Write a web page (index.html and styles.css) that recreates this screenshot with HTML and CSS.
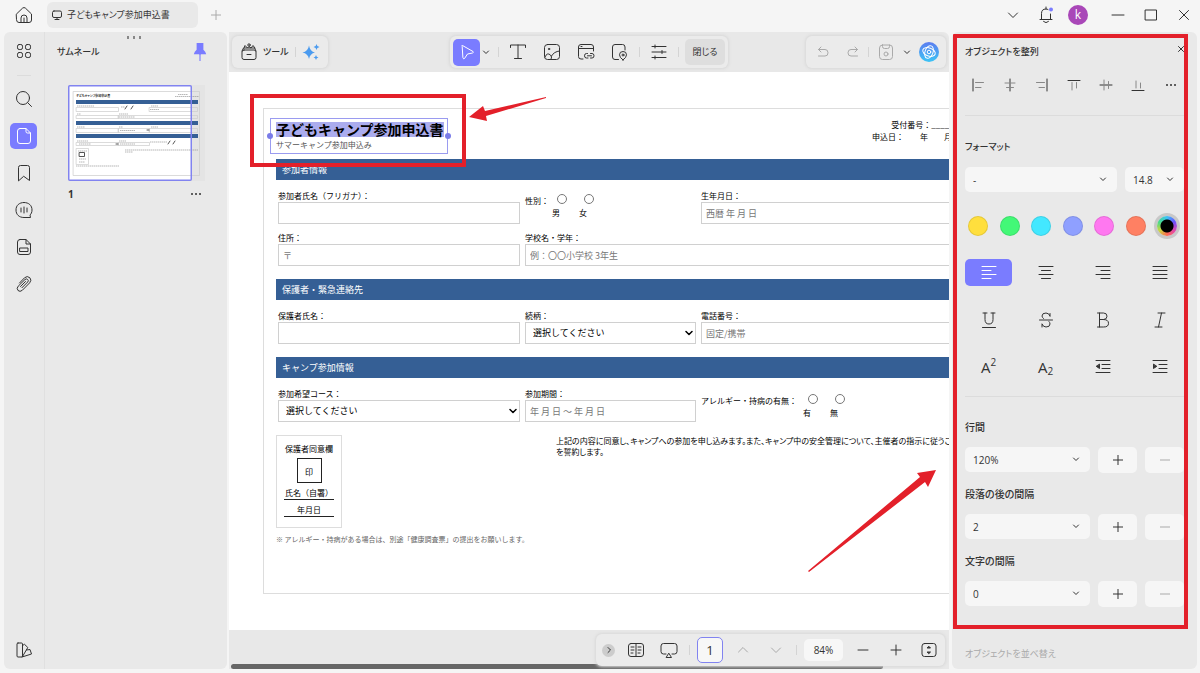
FILE: index.html
```html
<!DOCTYPE html>
<html lang="ja">
	<head>
		<meta charset="UTF-8">
		<title>子どもキャンプ参加申込書</title>
		<meta name="viewport" content="width=device-width,initial-scale=1" />
		<link rel="stylesheet" href="styles.css">
	</head>
	<body>
		<header class="titlebar">
			<button class="home" aria-label="ホーム"><svg class="icon" viewBox="0 0 18 18"><path d="M1.500 8L7.600 2.100Q9 1 10.400 2.100L16.500 8V14Q16.500 16.500 14 16.500H4Q1.500 16.500 1.500 14Z"/><path d="M6 16.500V12Q6 9 9 9T12 12V16.500M9 12V16.500"/></svg></button>
			<button class="tab"><svg viewBox="0 0 10 10"><rect x=".5" y="1" width="9" height="6.500" rx="1.500"/><path d="M3 9.500H7M5 7.500V9.500"/></svg>子どもキャンプ参加申込書</button>
			<button class="add" aria-label="新しいタブ"><svg viewBox="0 0 10 10"><path d="M5 0V10M0 5H10"/></svg></button>
			<div class="window">
				<button aria-label="メニュー"><svg class="icon" viewBox="0 0 18 18"><path d="M4.500 7L9 11.500L13.500 7"/></svg></button>
				<button aria-label="通知"><svg class="icon" viewBox="0 0 18 18"><path d="M3 13.500H15M4.500 13.500V7.500Q4.500 3 9 3Q10 3 11 3.500M13.500 8V13.500M9 3V1M6.500 15.500Q9 18 11.500 15.500"/><circle class="dot" cx="14" cy="3.500" r="2"/></svg></button>
				<span class="avatar">k</span>
				<button aria-label="最小化"><svg class="icon" viewBox="0 0 18 18"><path d="M3 9H15"/></svg></button>
				<button aria-label="最大化"><svg class="icon" viewBox="0 0 18 18"><rect x="3.500" y="4" width="11" height="10"/></svg></button>
				<button aria-label="終了"><svg class="icon" viewBox="0 0 18 18"><path d="M4.500 4.500L13.500 13.500M13.500 4.500L4.500 13.500"/></svg></button>
			</div>
		</header>

		<div class="main">
			<nav class="rail">
				<button aria-label="一覧"><svg class="icon" viewBox="0 0 18 18"><rect x="2.500" y="2.500" width="5" height="5" rx="1.700"/><rect x="10.500" y="2.500" width="5" height="5" rx="1.700"/><rect x="2.500" y="10.500" width="5" height="5" rx="1.700"/><rect x="10.500" y="10.500" width="5" height="5" rx="1.700"/></svg></button>
				<hr>
				<button aria-label="検索"><svg class="icon" viewBox="0 0 18 18"><circle cx="8" cy="8" r="6.500"/><path d="M12.800 12.800L16.500 16.500"/></svg></button>
				<button class="active" aria-label="サムネール"><svg class="icon" viewBox="0 0 18 18"><path d="M5 1.500H11L15.500 6V14Q15.500 16.500 13 16.500H5Q2.500 16.500 2.500 14V4Q2.500 1.500 5 1.500ZM11 1.500V4.500Q11 6 12.500 6H15.500"/></svg></button>
				<button aria-label="ブックマーク"><svg class="icon" viewBox="0 0 18 18"><path d="M3.500 16.500V3.500Q3.500 1.500 5.500 1.500H12.500Q14.500 1.500 14.500 3.500V16.500L9 12.500Z"/></svg></button>
				<button aria-label="コメント"><svg class="icon" viewBox="0 0 18 18"><path d="M9 1.500C14 1.500 17 4.500 17 9C17 11.500 16 13 15 14L15.500 16.500H9C4 16.500 1 13.500 1 9S4 1.500 9 1.500ZM6 7V11M9 6V12M12 7V11"/></svg></button>
				<button aria-label="フィールド"><svg class="icon" viewBox="0 0 18 18"><path d="M5 1.500H11L15.500 6V14Q15.500 16.500 13 16.500H5Q2.500 16.500 2.500 14V4Q2.500 1.500 5 1.500ZM11 1.500V6H15.500"/><rect x="5" y="10" width="8" height="3.500"/></svg></button>
				<button aria-label="添付ファイル"><svg class="icon" viewBox="0 0 18 18"><path d="M4.500 8L9.500 2.800Q12.300 .3 14.900 2.800Q17 5.200 14.700 7.800L7.300 15.300Q5 17.300 3 15.500Q1.200 13.300 3.200 11.200L10 4.500Q11.500 3.300 12.700 4.500Q14 5.700 12.700 7L7 12.700M5.500 11.500L10.500 6.500"/></svg></button>
				<button class="last" aria-label="テーマ"><svg class="icon" viewBox="0 0 18 18"><rect x="2" y="2" width="5.500" height="14" rx="1"/><path d="M7.500 4.500L9.500 3.300L12.800 6.500L7.500 15.500M11.500 9L15 8.500L16.500 13L7 16"/></svg></button>
			</nav>

			<aside class="thumbs">
				<div class="grip"><i></i><i></i><i></i></div>
				<div class="thumbs-head">
					<h2>サムネール</h2>
					<button aria-label="ピン留め"><svg viewBox="0 0 12 16"><path class="pin" d="M3 0H9V6Q11 7.500 11.500 10H.5Q1 7.500 3 6Z"/><path class="pin-line" d="M6 10V16"/></svg></button>
				</div>
				<div class="thumb">
					<svg viewBox="0 0 138 96">
						<rect class="side" x="123" y="0" width="14" height="96"/>
						<rect class="paper" x="1" y="1" width="122" height="94"/>
						<rect class="sheet-line" x="5.500" y="6.500" width="126" height="84"/>
						<text x="8" y="12">子どもキャンプ参加申込書</text>
						<g class="bars"><rect x="8" y="15" width="122" height="4"/><rect x="8" y="36" width="122" height="4"/><rect x="8" y="49" width="122" height="4"/></g>
						<g class="boxes"><rect x="8.500" y="22.500" width="42" height="4"/><rect x="81.500" y="22.500" width="48" height="4"/><rect x="8.500" y="30.500" width="42" height="3"/><rect x="50.500" y="30.500" width="79" height="3"/><rect x="8.500" y="43.500" width="42" height="4"/><rect x="50.500" y="43.500" width="31" height="4"/><rect x="81.500" y="43.500" width="48" height="4"/><rect x="8.500" y="57.500" width="42" height="3"/><rect x="50.500" y="57.500" width="31" height="3"/><rect x="8.500" y="63.500" width="12" height="16"/></g>
						<g class="words"><path d="M110 9.500H120M107 11.500H131M9 21H26M53 22H57M83 21H90M9 29H13M51 29H60M9 42H17M51 42H55M83 42H90M9 56H20M51 56H58M82 57H99M57 65H130M57 67H65M8 81H51M82 24.500H91M51 32H67M52 45.500H67M11 59H23M52 59H67M10 66H19M11 74H18M11 77H17"/></g>
						<path class="marks" d="M59 21L57 24M65 21L63 24M102 56L100 59M107 56L105 59M48 59H50M79 45H81"/>
						<rect class="stamp" x="11.500" y="67.500" width="5" height="4"/>
						<rect class="view" x=".750" y=".750" width="122.500" height="94.500" rx="1"/>
					</svg>
				</div>
				<div class="thumb-foot"><b>1</b><button aria-label="その他"><svg viewBox="0 0 10 4"><path class="dots" d="M1 2H1.010M5 2H5.010M9 2H9.010"/></svg></button></div>
			</aside>

			<main class="editor">
				<div class="toolbar">
					<div class="group tools">
						<button><svg class="icon" viewBox="0 0 18 18"><rect x="2" y="7" width="14" height="9.500" rx="2"/><path d="M2 8L3.500 5H14.500L16 8M7 11.500H11M4 5L5 2.500L7.500 5L9 3.500L11 5L13 2.500L15 5"/><circle cx="9" cy="2" r="1.200"/></svg>ツール</button>
						<hr>
						<button aria-label="AI"><svg class="icon spark" viewBox="0 0 18 18"><path d="M7 2.500Q8 8.500 13 9.500Q8 10.500 7 16Q6 10.500 .5 9.500Q6 8.500 7 2.500ZM14.500 1Q14.800 3.700 17.500 4Q14.800 4.500 14.500 7Q14.200 4.500 11.500 4Q14.200 3.700 14.500 1ZM14 12Q14.300 14.200 16.500 14.500Q14.300 14.800 14 17Q13.700 14.800 11.500 14.500Q13.700 14.200 14 12Z"/></svg></button>
					</div>
					<div class="group edit">
						<button class="active" aria-label="選択"><svg class="icon" viewBox="0 0 18 18"><path d="M4 3Q3.500 2 4.500 2.500L15 8.500Q16 9.500 14.500 10L9.500 11L6.500 15.500Q5.500 16.500 5 15Z"/></svg></button>
						<button class="caret" aria-label="選択メニュー"><svg viewBox="0 0 8 8"><path d="M1.500 3L4 5.500L6.500 3"/></svg></button>
						<hr>
						<button class="tool" aria-label="テキスト"><svg class="icon" viewBox="0 0 18 18"><path d="M1.500 4.500V2H16.500V4.500M9 2V15.500M5.500 15.500H12.500"/></svg></button>
						<button class="tool" aria-label="画像"><svg class="icon" viewBox="0 0 18 18"><rect x="1.500" y="1.500" width="15" height="15" rx="3"/><path d="M2 14Q4 9 7.500 12Q9.500 13.500 8 16.500M8.500 13Q11 8.500 16.500 8"/><circle cx="6" cy="6" r=".7"/></svg></button>
						<button class="tool" aria-label="リンク"><svg class="icon" viewBox="0 0 18 18"><path d="M6 16H4Q1.500 16 1.500 13.500V4Q1.500 1.500 4 1.500H14Q16.500 1.500 16.500 4V8M1.500 5.500H16.500M4 3.500H5M10.500 10.500H9.500Q7.500 10.500 7.500 12.800T9.500 15H11M13.500 10.500H15Q17 10.500 17 12.800T15 15H13.500M10.500 12.800H14.500"/></svg></button>
						<button class="tool" aria-label="透かし"><svg class="icon" viewBox="0 0 18 18"><path d="M7.500 16.500H4Q1.500 16.500 1.500 14V4Q1.500 1.500 4 1.500H11.500Q14 1.500 14 4V7M12 17Q8.500 14.500 8.500 11.800Q8.500 8.500 12 8.500T15.500 11.800Q15.500 14.500 12 17Z"/><circle cx="12" cy="12" r="1"/></svg></button>
						<hr>
						<button class="tool" aria-label="設定"><svg class="icon" viewBox="0 0 18 18"><path d="M2 3.500H16M2 9H16M2 14.500H16M5 2V5M12 7.500V10.500M5 13V16"/></svg></button>
						<hr>
						<button class="close-edit">閉じる</button>
					</div>
					<div class="group history">
						<button class="faint" aria-label="元に戻す"><svg class="icon" viewBox="0 0 18 18"><path d="M7 4L4.500 6.500L7 9M4.500 6.500H11Q14 6.500 14 9.800T11 13H4.500"/></svg></button>
						<button class="faint" aria-label="やり直し"><svg class="icon" viewBox="0 0 18 18"><path d="M11 4L13.500 6.500L11 9M13.500 6.500H7Q4 6.500 4 9.800T7 13H13.500"/></svg></button>
						<hr>
						<button class="faint" aria-label="保存"><svg class="icon" viewBox="0 0 18 18"><rect x="2.500" y="2" width="13" height="14.500" rx="3"/><path d="M5.500 2V3.500Q5.500 5.500 7.500 5.500H10.500Q12.500 5.500 12.500 3.500V2"/><circle cx="9" cy="11" r="2"/></svg></button>
						<button class="caret" aria-label="保存メニュー"><svg viewBox="0 0 8 8"><path d="M1.500 3L4 5.500L6.500 3"/></svg></button>
						<button class="assistant" aria-label="アシスタント"><svg class="icon" viewBox="0 0 18 18"><ellipse cx="9" cy="9" rx="6.500" ry="4" transform="rotate(20 9 9)"/><ellipse cx="9" cy="9" rx="4" ry="6.500" transform="rotate(20 9 9)"/><circle cx="9" cy="9" r="1.800"/></svg></button>
					</div>
				</div>

				<div class="canvas">
					<form class="sheet">
						<div class="sheet-head">
							<div class="picked">
								<h1>子どもキャンプ参加申込書</h1>
								<p>サマーキャンプ参加申込み</p>
							</div>
							<p class="receipt">受付番号：__________<br>申込日：　　年　　月　　日</p>
						</div>

						<h3>参加者情報</h3>
						<div class="fields">
							<label>参加者氏名（フリガナ）：<input type="text"></label>
							<div class="radios"><span>性別：</span><label><input type="radio" name="sex">男</label><label><input type="radio" name="sex">女</label></div>
							<label>生年月日：<input type="text" placeholder="西暦 年 月 日"></label>
							<label>住所：<input type="text" placeholder="〒"></label>
							<label class="wide">学校名・学年：<input type="text" placeholder="例：〇〇小学校 3年生"></label>
						</div>

						<h3>保護者・緊急連絡先</h3>
						<div class="fields">
							<label>保護者氏名：<input type="text"></label>
							<label>続柄：<span class="pick"><select><option>選択してください</option></select><svg viewBox="0 0 8 8"><path d="M1 2.500L4 5.500L7 2.500"/></svg></span></label>
							<label>電話番号：<input type="text" placeholder="固定/携帯"></label>
						</div>

						<h3>キャンプ参加情報</h3>
						<div class="fields">
							<label>参加希望コース：<span class="pick"><select><option>選択してください</option></select><svg viewBox="0 0 8 8"><path d="M1 2.500L4 5.500L7 2.500"/></svg></span></label>
							<label>参加期間：<input type="text" placeholder="年 月 日 ～ 年 月 日"></label>
							<div class="radios allergy"><span>アレルギー・持病の有無：</span><label><input type="radio" name="allergy">有</label><label><input type="radio" name="allergy">無</label></div>
						</div>

						<div class="agree">
							<div class="sign">
								<p>保護者同意欄</p>
								<div class="seal">印</div>
								<p class="line">氏名（自署）</p>
								<p class="line">年月日</p>
							</div>
							<p class="consent">上記の内容に同意し、キャンプへの参加を申し込みます。また、キャンプ中の安全管理について、主催者の指示に従うこと<br>を誓約します。</p>
						</div>
						<p class="note">※ アレルギー・持病がある場合は、別途「健康調査票」の提出をお願いします。</p>
					</form>
					<div class="mark mark-title"></div>
					<svg class="arrow arrow-title" viewBox="0 0 78 26"><path d="M0 20L14 9L16 14L77 0V1L17 19L18 24Z"/></svg>
					<svg class="arrow arrow-panel" viewBox="0 0 130 104"><path d="M129 1L110 4L113 8L1 102L2 103L118 13L121 18Z"/></svg>
				</div>

				<div class="statusbar">
					<div class="scroll"></div>
					<div class="group pager">
						<button class="round" aria-label="展開"><svg viewBox="0 0 8 8"><path d="M3 1.500L5.500 4L3 6.500"/></svg></button>
						<button class="tool" aria-label="見開き"><svg class="icon" viewBox="0 0 18 18"><rect x="1.500" y="2.500" width="15" height="13" rx="2.500"/><path d="M9 2.500V15.500M4 6H7M4 9H7M4 12H6M11 6H14M11 9H14M11 12H13"/></svg></button>
						<button class="tool" aria-label="スライド"><svg class="icon" viewBox="0 0 18 18"><path d="M6 13H3.500Q1 13 1 10.500V5Q1 2.500 3.500 2.500H14.500Q17 2.500 17 5V10.500Q17 13 14.500 13H12M9 12.500L11.500 16.500H6.500Z"/></svg></button>
						<hr>
						<input class="page" type="text" value="1" aria-label="ページ">
						<button class="tool faint" aria-label="前のページ"><svg class="icon" viewBox="0 0 18 18"><path d="M4.500 11L9 6.500L13.500 11"/></svg></button>
						<button class="tool faint" aria-label="次のページ"><svg class="icon" viewBox="0 0 18 18"><path d="M4.500 7L9 11.500L13.500 7"/></svg></button>
						<hr>
						<input class="zoom" type="text" value="84%" aria-label="倍率">
						<button class="tool" aria-label="縮小"><svg class="icon" viewBox="0 0 18 18"><path d="M4 9H14"/></svg></button>
						<button class="tool" aria-label="拡大"><svg class="icon" viewBox="0 0 18 18"><path d="M4 9H14M9 4V14"/></svg></button>
						<button class="tool" aria-label="全体表示"><svg class="icon" viewBox="0 0 18 18"><rect x="2" y="2.500" width="14" height="13" rx="2.500"/><path class="solid" d="M9 5.500L10.500 7H7.500ZM9 12.500L10.500 11H7.500Z"/></svg></button>
					</div>
				</div>
			</main>

			<aside class="props">
				<div class="props-head">
					<h2>オブジェクトを整列</h2>
					<button aria-label="閉じる"><svg viewBox="0 0 8 8"><path d="M1.500 1.500L6.500 6.500M6.500 1.500L1.500 6.500"/></svg></button>
				</div>
				<div class="aligns">
					<button aria-label="左揃え"><svg class="icon" viewBox="0 0 18 18"><path d="M4 3V15"/><path class="thin" d="M6.500 6.500H14.500M6.500 11.500H12"/></svg></button>
					<button aria-label="中央揃え"><svg class="icon" viewBox="0 0 18 18"><path d="M9 3V15"/><path class="thin" d="M4 7H14M5.500 11.500H12.500"/></svg></button>
					<button aria-label="右揃え"><svg class="icon" viewBox="0 0 18 18"><path d="M14 3V15"/><path class="thin" d="M3.500 6.500H11.500M6 11.500H11.500"/></svg></button>
					<button aria-label="上揃え"><svg class="icon" viewBox="0 0 18 18"><path d="M3 4.500H15"/><path class="thin" d="M7 6.500V14M11.500 6.500V12"/></svg></button>
					<button aria-label="中段揃え"><svg class="icon" viewBox="0 0 18 18"><path d="M3 9H15"/><path class="thin" d="M7 4V14M11.500 5.500V12.500"/></svg></button>
					<button aria-label="下揃え"><svg class="icon" viewBox="0 0 18 18"><path d="M3 14.500H15"/><path class="thin" d="M7 5V12M11.500 7V12"/></svg></button>
					<button aria-label="その他"><svg class="icon" viewBox="0 0 18 18"><path class="dots" d="M6 9H6.010M10 9H10.010M14 9H14.010"/></svg></button>
				</div>
				<hr>
				<h2>フォーマット</h2>
				<div class="fonts">
					<span class="drop"><select aria-label="フォント"><option>-</option></select><svg viewBox="0 0 8 8"><path d="M1.500 3L4 5.500L6.500 3"/></svg></span>
					<span class="drop"><select aria-label="サイズ"><option>14.8</option></select><svg viewBox="0 0 8 8"><path d="M1.500 3L4 5.500L6.500 3"/></svg></span>
				</div>
				<div class="colors">
					<button class="yellow" aria-label="黄"></button>
					<button class="green" aria-label="緑"></button>
					<button class="cyan" aria-label="水色"></button>
					<button class="blue" aria-label="青"></button>
					<button class="pink" aria-label="ピンク"></button>
					<button class="coral" aria-label="オレンジ"></button>
					<button class="custom" aria-label="カスタム"></button>
				</div>
				<div class="formats">
					<button class="active" aria-label="左寄せ"><svg class="icon" viewBox="0 0 18 18"><path d="M2 2.500H16M2 6.500H11M2 10.500H16M2 14.500H11"/></svg></button>
					<button aria-label="中央寄せ"><svg class="icon" viewBox="0 0 18 18"><path d="M2 2.500H16M4.500 6.500H13.500M2 10.500H16M4.500 14.500H13.500"/></svg></button>
					<button aria-label="右寄せ"><svg class="icon" viewBox="0 0 18 18"><path d="M2 2.500H16M7 6.500H16M2 10.500H16M7 14.500H16"/></svg></button>
					<button aria-label="両端揃え"><svg class="icon" viewBox="0 0 18 18"><path d="M2 2.500H16M2 6.500H16M2 10.500H16M2 14.500H16"/></svg></button>
					<button aria-label="下線"><svg class="icon" viewBox="0 0 18 18"><path d="M3 2H7M11 2H15M5 2V8.500Q5 13 9 13T13 8.500V2M2.500 16.500H15.500"/></svg></button>
					<button aria-label="取り消し線"><svg class="icon" viewBox="0 0 18 18"><path d="M13 5V2.500M13 5Q12 2 9 2Q5 2 5 5Q5 6.500 6.500 7.500M2.500 9H15.500M5 13.500V16M5 13Q6 16 9 16Q13 16 13 13Q13 11.500 12 10.500"/></svg></button>
					<button aria-label="太字"><svg class="icon" viewBox="0 0 18 18"><path d="M3.500 2H9.500Q13 2 13 5.200T9.500 8.500H5.500M9.500 8.500Q14.500 8.500 14.500 12.300T9.500 16H3.500M5.500 2V16"/></svg></button>
					<button aria-label="斜体"><svg class="icon" viewBox="0 0 18 18"><path d="M7 2H14M4 16H11M10.500 2L7.500 16"/></svg></button>
					<button class="script" aria-label="上付き">A<sup>2</sup></button>
					<button class="script" aria-label="下付き">A<sub>2</sub></button>
					<button aria-label="インデント減"><svg class="icon" viewBox="0 0 18 18"><path d="M2 2.500H16M8 6.500H16M8 10.500H16M2 14.500H16"/><path class="solid" d="M5.500 6.500V10.500L2.500 8.500Z"/></svg></button>
					<button aria-label="インデント増"><svg class="icon" viewBox="0 0 18 18"><path d="M2 2.500H16M8 6.500H16M8 10.500H16M2 14.500H16"/><path class="solid" d="M2.500 6.500V10.500L5.500 8.500Z"/></svg></button>
				</div>
				<hr>
				<div class="spacings">
					<label for="line">行間</label>
					<div class="stepper">
						<span class="drop"><select id="line"><option>120%</option></select><svg viewBox="0 0 8 8"><path d="M1.500 3L4 5.500L6.500 3"/></svg></span>
						<button aria-label="増やす"><svg viewBox="0 0 10 10"><path d="M0 5H10M5 0V10"/></svg></button>
						<button class="faint" aria-label="減らす"><svg viewBox="0 0 10 10"><path d="M0 5H10"/></svg></button>
					</div>
					<label for="para">段落の後の間隔</label>
					<div class="stepper">
						<span class="drop"><select id="para"><option>2</option></select><svg viewBox="0 0 8 8"><path d="M1.500 3L4 5.500L6.500 3"/></svg></span>
						<button aria-label="増やす"><svg viewBox="0 0 10 10"><path d="M0 5H10M5 0V10"/></svg></button>
						<button class="faint" aria-label="減らす"><svg viewBox="0 0 10 10"><path d="M0 5H10"/></svg></button>
					</div>
					<label for="char">文字の間隔</label>
					<div class="stepper">
						<span class="drop"><select id="char"><option>0</option></select><svg viewBox="0 0 8 8"><path d="M1.500 3L4 5.500L6.500 3"/></svg></span>
						<button aria-label="増やす"><svg viewBox="0 0 10 10"><path d="M0 5H10M5 0V10"/></svg></button>
						<button class="faint" aria-label="減らす"><svg viewBox="0 0 10 10"><path d="M0 5H10"/></svg></button>
					</div>
				</div>
				<h2 class="off">オブジェクトを並べ替え</h2>
				<div class="mark mark-panel"></div>
			</aside>
		</div>
	</body>
</html>
```

FILE: styles.css
```css
*{
	padding:0;
	margin:0;
	box-sizing: border-box;
}
body{
	height:100vh;
	display: flex;
	flex-direction: column;
	overflow: hidden;
	background: #f5f5f5;
	color: #333;
	font: 10px/14px "Open Sans","Noto Sans CJK JP",sans-serif;
	font-feature-settings: "palt";
}
button,input,select{
	font: inherit;
	font-feature-settings: inherit;
	color: inherit;
	border: 0;
	background: none;
}
button{
	display: flex;
	align-items: center;
	justify-content: center;
	flex-shrink: 0;
}
svg{
	display: block;
	width:10px;
	height:10px;
	fill: none;
	stroke: currentColor;
	stroke-linecap: round;
	stroke-linejoin: round;
}
.icon{
	width:18px;
	height:18px;
}
h2{
	font-size: 9px;
	font-weight: 500;
}
hr{
	border: 0;
	background: #dcdcdc;
}
.dots{
	stroke-width: 2;
}
.solid{
	fill: currentColor;
}
.active{
	background: #7a7cff;
	color: #fff;
}
.faint{
	color: #aaa;
}

/* title bar */
.titlebar{
	height:32px;
	flex-shrink: 0;
	display: flex;
	align-items: center;
	padding:0 0 2px 10px;
}
.home{
	width:27px;
}
.tab{
	width:151px;
	height:26px;
	margin-left:10px;
	padding-left:5px;
	gap:5px;
	justify-content: flex-start;
	background: #e9e9e9;
	border-radius: 6px;
	font-size: 9px;
}
.add{
	width:36px;
	color: #aaa;
}
.window{
	margin-left:auto;
	display: flex;
	align-items: center;
}
.window button{
	width:33px;
}
.window .dot{
	fill: #7a7cff;
	stroke: none;
}
.avatar{
	width:20px;
	height:20px;
	margin:0 13px 0 6px;
	border-radius: 50%;
	background: #a947b8;
	color: #fff;
	font-size: 12px;
	line-height: 19px;
	text-align: center;
}

.main{
	flex: 1;
	min-height: 0;
	display: flex;
	padding:0 3px 4px 4px;
}

/* left side */
.rail{
	width:41px;
	flex-shrink: 0;
	display: flex;
	flex-direction: column;
	align-items: center;
	gap:11px;
	padding:6px 1px 6px 0;
	background: #e9e9e9;
	border-right: 1px solid #e0e0e0;
	border-radius: 6px 0 0 6px;
}
.rail button{
	width:27px;
	height:26px;
	border-radius: 5px;
}
.rail hr{
	width:14px;
	height:1px;
	margin-bottom: -1px;
}
.rail .last{
	margin-top: auto;
}
.thumbs{
	width:182px;
	flex-shrink: 0;
	padding:4px 17px 0 12px;
	background: #e9e9e9;
	border-radius: 0 6px 6px 0;
}
.grip{
	display: flex;
	justify-content: center;
	gap:4px;
}
.grip i{
	width:2px;
	height:3px;
	background: #888;
}
.thumbs-head{
	display: flex;
	align-items: center;
	justify-content: space-between;
	margin-top: 4px;
	padding-right: 3px;
}
.thumbs-head svg{
	width:14px;
	height:18px;
}
.pin{
	fill: #7a7cff;
	stroke: none;
}
.pin-line{
	stroke: #7a7cff;
}
.thumb{
	margin:24px 0 0 11px;
}
.thumb svg{
	width:138px;
	height:96px;
}
.thumb .side{
	fill: #e4e4e4;
	stroke: none;
}
.thumb .paper{
	fill: #fff;
	stroke: none;
}
.thumb .sheet-line,.thumb .boxes{
	stroke: #ccc;
	stroke-width: .7;
}
.thumb text{
	font-size: 3px;
	font-weight: bold;
	fill: #222;
	stroke: none;
}
.thumb .bars{
	fill: #355f95;
	stroke: none;
}
.thumb .words{
	stroke: #999;
	stroke-dasharray: 1.500 .5;
	stroke-width: .7;
	stroke-linecap: butt;
}
.thumb .marks,.thumb .stamp{
	stroke: #555;
}
.thumb .view{
	stroke: #8183f0;
	stroke-width: 1.500;
}
.thumb-foot{
	display: flex;
	justify-content: space-between;
	padding:6px 9px 0 11px;
}
.thumb-foot svg{
	height:4px;
}

/* editor */
.editor{
	flex: 1;
	min-width: 0;
	display: flex;
	flex-direction: column;
	margin:0 3px 0 2px;
}
.toolbar{
	height:40px;
	flex-shrink: 0;
	display: grid;
	grid-template-columns: 1fr auto 1fr;
	align-items: center;
	padding:0 3px;
	background: #e8e8e8;
	border-radius: 0 6px 0 0;
	font-size: 9px;
}
.group{
	height:32px;
	display: flex;
	align-items: center;
	padding:0 2px;
	background: #ebebeb;
	border-radius: 6px;
	box-shadow: 0 0 3px 1px #d8d8d8;
}
.group hr{
	width:1px;
	height:10px;
	background: #d4d4d4;
}
.tools{
	justify-self: start;
	font-weight: 500;
}
.tools button{
	gap:5px;
	padding:0 6px;
}
.spark{
	color: #4b9bef;
	fill: #4b9bef;
	stroke: none;
}
.edit{
	padding:0 3px;
}
.edit hr{
	margin:0 2px;
}
.group .active{
	width:27px;
	height:27px;
	border-radius: 5px;
}
.caret{
	width:12px;
}
.caret svg{
	width:8px;
	height:8px;
}
.caret + hr{
	margin-left: 6px;
}
.tool{
	width:34px;
}
.close-edit{
	width:40px;
	height:26px;
	margin-left: 4px;
	background: #dedede;
	border-radius: 5px;
}
.history{
	justify-self: end;
}
.history .faint{
	width:30px;
}
.history hr + .faint{
	width:34px;
}
.history .caret{
	width:8px;
}
.assistant{
	width:20px;
	height:20px;
	margin:0 5px 0 8px;
	border-radius: 50%;
	background: linear-gradient(#5c7cf0,#3cc4f5);
	color: #fff;
}
.canvas{
	flex: 1;
	position: relative;
	overflow: hidden;
	padding:36px 0 0 34px;
	background: #fff;
}

/* the form on the page */
.sheet{
	width:726px;
	padding:0 12px 48px;
	border: 1px solid #ddd;
	color: #000;
	font: 8px/12px "Noto Sans CJK JP",sans-serif;
	font-feature-settings: normal;
}
.sheet-head{
	display: flex;
	justify-content: space-between;
	height:50px;
	padding-top: 9px;
}
.receipt{
	padding-top: 1px;
	text-align: right;
}
.picked{
	position: relative;
	height:36px;
	margin-left: -6px;
	padding:3px 3px 0 5px;
	border: 1px solid #9a9bf0;
}
.picked:before,.picked:after{
	content: "";
	position: absolute;
	left:-4px;
	top:14px;
	width:6px;
	height:6px;
	border-radius: 50%;
	background: #7a7ce8;
}
.picked:after{
	left:auto;
	right:-4px;
}
.picked h1{
	background: #abacee;
	font-size: 14px;
	line-height: 15px;
}
.picked p{
	margin-top: 2px;
	color: #555;
}
.sheet h3{
	height:21px;
	padding-left: 6px;
	background: #355f95;
	color: #fff;
	font-size: 9px;
	font-weight: normal;
	line-height: 21px;
}
.fields{
	display: grid;
	grid-template-columns: 242px 171px 1fr;
	gap:8px 5px;
	padding:10px 3px 13px 2px;
}
.fields label{
	display: block;
}
.fields .wide{
	grid-column: span 2;
}
.fields input[type=text],.fields select{
	display: block;
	width:100%;
	height:22px;
	padding:0 4px;
	border: 1px solid #d0d0d0;
	background: #fff;
	font-size: 9px;
}
.fields input::placeholder{
	color: #777;
}
.fields select{
	padding:0 7px;
	appearance: none;
}
.pick,.drop{
	display: block;
	position: relative;
}
.pick svg,.drop svg{
	position: absolute;
	right:3px;
	top:7px;
	width:8px;
	height:8px;
	stroke-width: 1.500;
	pointer-events: none;
}
.radios{
	display: flex;
	gap:3px;
}
.radios span{
	padding-top: 5px;
}
.radios label{
	width:24px;
	padding-top: 4px;
}
.radios input{
	display: block;
	appearance: none;
	width:10px;
	height:10px;
	margin:0 0 3px 5px;
	border: 1px solid #777;
	border-radius: 50%;
}
.allergy{
	padding-top: 2px;
}
.allergy span{
	padding-right: 3px;
}
.agree{
	display: flex;
	justify-content: space-between;
	align-items: flex-start;
}
.sign{
	width:66px;
	height:93px;
	padding:7px;
	border: 1px solid #ddd;
	text-align: center;
}
.seal{
	width:25px;
	height:25px;
	margin:3px auto 0;
	border: 1px solid #222;
	line-height: 25px;
}
.sign .line{
	margin-top: 4px;
	border-bottom: 1px solid #222;
	white-space: nowrap;
}
.consent{
	width:60%;
	line-height: 11px;
	white-space: nowrap;
	font-feature-settings: "palt";
}
.note{
	margin-top: 5px;
	color: #666;
	font-size: 7px;
}

/* red marks over the screen */
.mark{
	position: absolute;
	border: 4px solid #e3202a;
	pointer-events: none;
}
.mark-title{
	left:21px;
	top:22px;
	width:216px;
	height:73px;
}
.arrow{
	position: absolute;
	fill: #e3202a;
	stroke: none;
}
.arrow-title{
	left:240px;
	top:25px;
	width:78px;
	height:26px;
}
.arrow-panel{
	left:578px;
	top:397px;
	width:130px;
	height:104px;
}
.mark-panel{
	top:2px;
	right:9px;
	bottom:40px;
	left:1px;
}

/* status bar */
.statusbar{
	height:39px;
	flex-shrink: 0;
	position: relative;
	display: flex;
	justify-content: flex-end;
	align-items: flex-start;
	padding:4px 4px 0 0;
	background: #e8e8e8;
}
.scroll{
	position: absolute;
	left:2px;
	right:66px;
	bottom:0;
	height:5px;
	border-radius: 3px;
	background: #666;
}
.pager{
	position: relative;
	padding:0 0 0 6px;
}
.pager .tool{
	width:33px;
}
.round{
	width:13px;
	height:13px;
	margin-right: 4px;
	border-radius: 50%;
	background: #ccc;
}
.round svg{
	width:8px;
	height:8px;
}
.pager hr{
	margin:0 7px 0 4px;
}
.pager input{
	height:22px;
	margin-right: 3px;
	border-radius: 5px;
	background: #f7f7f7;
	text-align: center;
}
.pager .page{
	width:26px;
	height:26px;
	border: 1px solid #8183f0;
	font-size: 13px;
}
.pager .zoom{
	width:39px;
}

/* right panel */
.props{
	width:245px;
	flex-shrink: 0;
	position: relative;
	overflow: hidden;
	padding:9px 13px 0 13px;
	background: #e9e9e9;
	border-radius: 6px;
}
.props-head{
	display: flex;
	align-items: center;
	justify-content: space-between;
	height:22px;
}
.props-head button{
	width:8px;
	height:8px;
	margin:0 -1px 6px 0;
}
.props-head svg{
	width:8px;
	height:8px;
}
.aligns{
	display: grid;
	grid-template-columns: repeat(7,32px);
	margin:13px 0 21px -3px;
}
.aligns .thin{
	stroke: #888;
}
.props hr{
	height:1px;
}
.props hr + h2{
	margin:24px 0 13px;
}
.fonts{
	display: grid;
	grid-template-columns: 152px 1fr;
	gap:8px;
}
.drop{
	flex: 1;
}
.drop select{
	display: block;
	width:100%;
	height:25px;
	padding:0 8px;
	appearance: none;
	background: #f6f6f6;
	border-radius: 5px;
}
.drop svg{
	top:8px;
	right:10px;
	stroke-width: 1;
}
.colors{
	display: flex;
	justify-content: space-between;
	align-items: center;
	height:26px;
	margin:21px 7px 20px 3px;
}
.colors button{
	width:20px;
	height:20px;
	border-radius: 50%;
	box-shadow: inset 0 0 0 1px rgba(0,0,0,.1);
}
.yellow{
	background: #ffdf3d;
}
.green{
	background: #43f877;
}
.cyan{
	background: #43e8ff;
}
.blue{
	background: #8fa0ff;
}
.pink{
	background: #ff78f0;
}
.coral{
	background: #ff8063;
}
.colors .custom{
	background: radial-gradient(#000 0 6px,transparent 7px),conic-gradient(#3cc4f5,#6a50ff,#e048b0,#ff6a50,#c8d840,#43d890,#3cc4f5);
	box-shadow: 0 0 0 3px #c8c8c8;
}
.formats{
	display: grid;
	grid-template-columns: repeat(4,47px);
	justify-content: space-between;
	row-gap: 20px;
	margin:0 1px 16px 0;
}
.formats button{
	height:27px;
	border-radius: 5px;
}
.formats .script{
	padding:2px 0;
	font-size: 15px;
}
.script sup,.script sub{
	font-size: 10px;
	align-self: flex-start;
}
.script sub{
	align-self: flex-end;
}
.spacings{
	padding-top: 17px;
	font-weight: 500;
}
.spacings label{
	display: block;
	padding:6px 0 13px;
}
.stepper{
	display: flex;
	gap:8px;
	margin-bottom: 8px;
	font-weight: normal;
}
.stepper button{
	width:39px;
	height:26px;
	border-radius: 5px;
	background: #f6f6f6;
}
.props .off{
	margin-top: 40px;
	color: #aaa;
	font-weight: normal;
}
```
